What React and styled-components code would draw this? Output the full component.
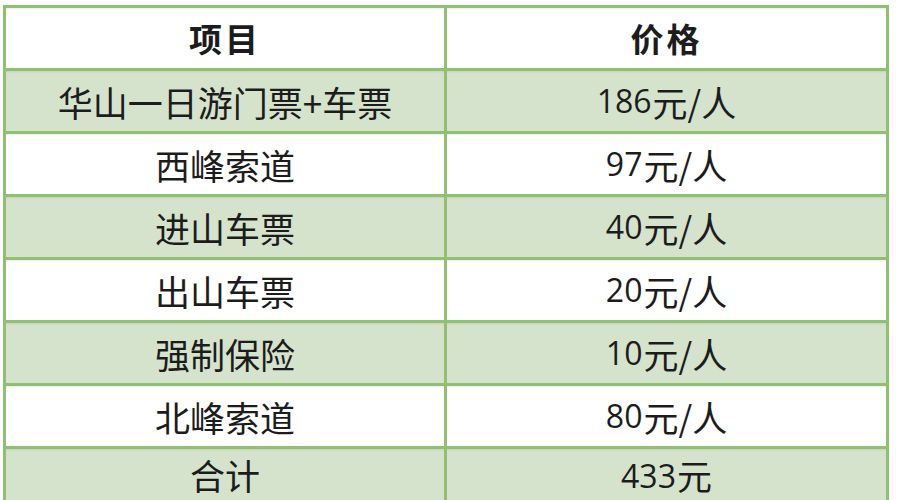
import React from "react";
import styled, { createGlobalStyle } from "styled-components";

const Global = createGlobalStyle`
  html, body { margin: 0; padding: 0; background: #ffffff; }
  body { font-family: "Noto Sans CJK SC", "Noto Sans", sans-serif; }
`;

const Page = styled.div`
  width: 904px;
  height: 500px;
  overflow: hidden;
  padding: 5px 0 0 3px;
  box-sizing: border-box;
  background: #ffffff;
`;

const Table = styled.div`
  display: grid;
  grid-template-columns: 438px 439px;
  grid-template-rows: repeat(7, 60px) 51px;
  gap: 3px;
  padding: 3px 3px 0 3px;
  width: max-content;
  background: #8fc170;
`;

const Cell = styled.div`
  display: flex;
  align-items: ${(p) => (p.$last ? "flex-end" : "center")};
  justify-content: center;
  box-sizing: border-box;
  padding-bottom: ${(p) => (p.$last ? "8px" : "0")};
  background: ${(p) => (p.$shaded ? "#d5e3cc" : "#ffffff")};
  color: #1c1c1c;
  font-size: ${(p) => (p.$head ? "33px" : "35px")};
  font-weight: ${(p) => (p.$head ? 700 : 400)};
  letter-spacing: ${(p) => (p.$head ? "3px" : "0")};
  line-height: 1;
  white-space: nowrap;
  box-shadow: inset 0 2px 2px -1px rgba(0, 0, 0, 0.08);
`;

const Num = styled.span`
  font-family: "Open Sans", "Noto Sans", sans-serif;
  font-size: 32px;
  line-height: 1;
  margin-right: 1px;
`;

const rows = [
  ["华山一日游门票+车票", "186", "元/人"],
  ["西峰索道", "97", "元/人"],
  ["进山车票", "40", "元/人"],
  ["出山车票", "20", "元/人"],
  ["强制保险", "10", "元/人"],
  ["北峰索道", "80", "元/人"],
  ["合计", "433", "元"],
];

export default function App() {
  return (
    <Page>
      <Global />
      <Table>
        <Cell $head>项目</Cell>
        <Cell $head>价格</Cell>
        {rows.map(([name, n, unit], i) => {
          const last = i === rows.length - 1;
          return (
            <React.Fragment key={name}>
              <Cell $shaded={i % 2 === 0} $last={last}>{name}</Cell>
              <Cell $shaded={i % 2 === 0} $last={last}>
                <Num>{n}</Num>
                {unit}
              </Cell>
            </React.Fragment>
          );
        })}
      </Table>
    </Page>
  );
}
